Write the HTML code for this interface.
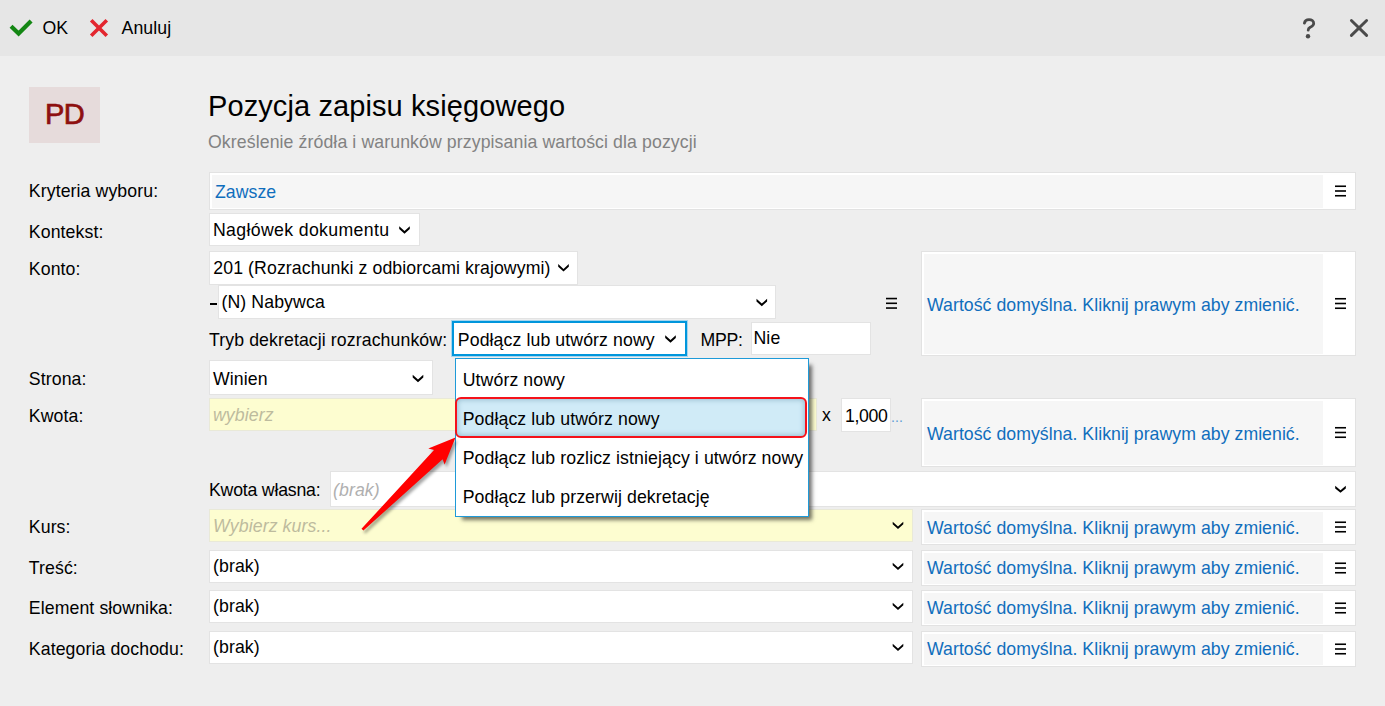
<!DOCTYPE html>
<html><head><meta charset="utf-8"><style>
html,body{margin:0;padding:0}
body{width:1385px;height:706px;overflow:hidden;background:#eeeeee;position:relative;font-family:"Liberation Sans",sans-serif}
.t{position:absolute;white-space:pre;letter-spacing:0.1px}
.b{position:absolute;box-sizing:border-box}
.s{position:absolute;overflow:visible}
</style></head><body>
<div class="b" style="left:0;top:0;width:1385px;height:56px;background:#e6e6e6"></div>
<svg class="s" style="left:0;top:0" width="1385" height="56"><polyline points="11.05,26.3 18.6,33.55 31.1,21.1" fill="none" stroke="#148714" stroke-width="4.2"/><path d="M91.2,20.2 L106.8,35.8 M106.8,20.2 L91.2,35.8" stroke="#e3262f" stroke-width="3.6" fill="none"/><path d="M1351.4,20.5 L1366.6,35.4 M1366.6,20.5 L1351.4,35.4" stroke="#4a4a4a" stroke-width="2.9" stroke-linecap="round" fill="none"/><path d="M1304.4,23.2 C1304.9,20.6 1306.8,19.7 1309,19.7 C1311.7,19.7 1313.7,21.2 1313.7,23.4 C1313.7,25.5 1311.8,26.4 1310.2,27.3 C1308.8,28.1 1308.2,28.8 1308.2,30.2" stroke="#4a4a4a" stroke-width="2.8" stroke-linecap="round" fill="none"/><circle cx="1308" cy="36.2" r="2.2" fill="#4a4a4a"/></svg>
<div class="t" style="left:42.50px;top:16.67px;font-size:17.7px;line-height:22px;color:#000;">OK</div>
<div class="t" style="left:121.50px;top:16.67px;font-size:17.7px;line-height:22px;color:#000;">Anuluj</div>
<div class="b" style="left:29px;top:87px;width:71px;height:56px;background:#e6dbdb;box-shadow:inset 0 0 0 1px #e6dbdb;"></div>
<div class="t" style="left:45.00px;top:96.15px;font-size:29px;line-height:36px;color:#8e1010;-webkit-text-stroke:0.7px #8e1010;letter-spacing:-0.5px">PD</div>
<div class="t" style="left:208.00px;top:87.65px;font-size:29px;line-height:36px;color:#000;">Pozycja zapisu księgowego</div>
<div class="t" style="left:208.00px;top:131.17px;font-size:17.7px;line-height:22px;color:#828282;">Określenie źródła i warunków przypisania wartości dla pozycji</div>
<div class="t" style="left:28.80px;top:179.77px;font-size:17.7px;line-height:22px;color:#000;">Kryteria wyboru:</div>
<div class="t" style="left:28.80px;top:221.07px;font-size:17.7px;line-height:22px;color:#000;">Kontekst:</div>
<div class="t" style="left:28.80px;top:258.47px;font-size:17.7px;line-height:22px;color:#000;">Konto:</div>
<div class="t" style="left:28.80px;top:367.97px;font-size:17.7px;line-height:22px;color:#000;">Strona:</div>
<div class="t" style="left:28.80px;top:404.87px;font-size:17.7px;line-height:22px;color:#000;">Kwota:</div>
<div class="t" style="left:28.80px;top:516.07px;font-size:17.7px;line-height:22px;color:#000;">Kurs:</div>
<div class="t" style="left:28.80px;top:556.87px;font-size:17.7px;line-height:22px;color:#000;">Treść:</div>
<div class="t" style="left:28.80px;top:597.07px;font-size:17.7px;line-height:22px;color:#000;">Element słownika:</div>
<div class="t" style="left:28.80px;top:637.57px;font-size:17.7px;line-height:22px;color:#000;">Kategoria dochodu:</div>
<div class="b" style="left:209px;top:172px;width:1147px;height:38px;background:#fff;box-shadow:inset 0 0 0 1px #e2e2e2;"></div>
<div class="b" style="left:212px;top:175px;width:1111px;height:33px;background:#f6f6f6"></div>
<svg class="s" style="left:0;top:0" width="1385" height="706"><line x1="1335" x2="1346" y1="186.25" y2="186.25" stroke="#000" stroke-width="1.6"/><line x1="1335" x2="1346" y1="191.00" y2="191.00" stroke="#000" stroke-width="1.6"/><line x1="1335" x2="1346" y1="195.75" y2="195.75" stroke="#000" stroke-width="1.6"/></svg>
<div class="t" style="left:215.00px;top:181.07px;font-size:17.7px;line-height:22px;color:#106ebd;letter-spacing:0.04px">Zawsze</div>
<div class="b" style="left:209px;top:213px;width:211px;height:33px;background:#fff;box-shadow:inset 0 0 0 1px #e3e3e3;"></div>
<div class="t" style="left:213.00px;top:219.07px;font-size:17.7px;line-height:22px;color:#000;letter-spacing:0.35px">Nagłówek dokumentu</div>
<svg class="s" style="left:0;top:0" width="1385" height="706"><polygon points="399.20,226.30 404.50,231.10 409.80,226.30 409.80,228.90 404.50,233.70 399.20,228.90" fill="#000"/></svg>
<div class="b" style="left:209px;top:251px;width:369px;height:34px;background:#fff;box-shadow:inset 0 0 0 1px #e3e3e3;"></div>
<div class="t" style="left:213.30px;top:257.47px;font-size:17.7px;line-height:22px;color:#000;">201 (Rozrachunki z odbiorcami krajowymi)</div>
<svg class="s" style="left:0;top:0" width="1385" height="706"><polygon points="558.20,264.10 563.50,268.90 568.80,264.10 568.80,266.70 563.50,271.50 558.20,266.70" fill="#000"/></svg>
<div class="b" style="left:210px;top:302.8px;width:7px;height:2px;background:#000"></div>
<div class="b" style="left:218px;top:285px;width:558px;height:34px;background:#fff;box-shadow:inset 0 0 0 1px #e3e3e3;"></div>
<div class="t" style="left:221.50px;top:290.97px;font-size:17.7px;line-height:22px;color:#000;">(N) Nabywca</div>
<svg class="s" style="left:0;top:0" width="1385" height="706"><polygon points="756.50,298.80 761.80,303.60 767.10,298.80 767.10,301.40 761.80,306.20 756.50,301.40" fill="#000"/></svg>
<svg class="s" style="left:0;top:0" width="1385" height="706"><line x1="886" x2="897" y1="298.55" y2="298.55" stroke="#000" stroke-width="1.6"/><line x1="886" x2="897" y1="303.30" y2="303.30" stroke="#000" stroke-width="1.6"/><line x1="886" x2="897" y1="308.05" y2="308.05" stroke="#000" stroke-width="1.6"/></svg>
<div class="b" style="left:921px;top:251px;width:435px;height:105px;background:#fff;box-shadow:inset 0 0 0 1px #e2e2e2;"></div>
<div class="b" style="left:924px;top:254px;width:399px;height:100px;background:#f6f6f6"></div>
<svg class="s" style="left:0;top:0" width="1385" height="706"><line x1="1335" x2="1346" y1="298.75" y2="298.75" stroke="#000" stroke-width="1.6"/><line x1="1335" x2="1346" y1="303.50" y2="303.50" stroke="#000" stroke-width="1.6"/><line x1="1335" x2="1346" y1="308.25" y2="308.25" stroke="#000" stroke-width="1.6"/></svg>
<div class="t" style="left:927.00px;top:293.97px;font-size:17.7px;line-height:22px;color:#106ebd;letter-spacing:0.04px">Wartość domyślna. Kliknij prawym aby zmienić.</div>
<div class="t" style="left:209.00px;top:329.27px;font-size:17.7px;line-height:22px;color:#000;">Tryb dekretacji rozrachunków:</div>
<div class="b" style="left:451px;top:320px;width:237px;height:37px;background:#fff;box-shadow:inset 0 0 0 1px #e3e3e3;box-shadow:inset 0 0 0 1px #a6d6ee, inset 0 0 0 3px #0096dc"></div>
<div class="t" style="left:457.80px;top:329.37px;font-size:17.7px;line-height:22px;color:#000;">Podłącz lub utwórz nowy</div>
<svg class="s" style="left:0;top:0" width="1385" height="706"><polygon points="665.20,335.30 670.50,340.10 675.80,335.30 675.80,337.90 670.50,342.70 665.20,337.90" fill="#000"/></svg>
<div class="t" style="left:700.50px;top:328.87px;font-size:17.7px;line-height:22px;color:#000;letter-spacing:-0.3px">MPP:</div>
<div class="b" style="left:751px;top:322px;width:120px;height:33px;background:#fff;box-shadow:inset 0 0 0 1px #e3e3e3;"></div>
<div class="t" style="left:753.50px;top:327.07px;font-size:17.7px;line-height:22px;color:#000;">Nie</div>
<div class="b" style="left:209px;top:360px;width:224px;height:35px;background:#fff;box-shadow:inset 0 0 0 1px #e3e3e3;"></div>
<div class="t" style="left:213.00px;top:368.07px;font-size:17.7px;line-height:22px;color:#000;">Winien</div>
<svg class="s" style="left:0;top:0" width="1385" height="706"><polygon points="412.70,374.80 418.00,379.60 423.30,374.80 423.30,377.40 418.00,382.20 412.70,377.40" fill="#000"/></svg>
<div class="b" style="left:209px;top:398px;width:608px;height:33px;background:#fdfdd0;box-shadow:inset 0 0 0 1px #e9e9d8;"></div>
<div class="t" style="left:213.00px;top:404.17px;font-size:17.7px;line-height:22px;color:#bdbb9e;font-style:italic">wybierz</div>
<div class="t" style="left:822.00px;top:404.37px;font-size:17.7px;line-height:22px;color:#000;">x</div>
<div class="b" style="left:841px;top:398px;width:50px;height:34px;background:#fff;box-shadow:inset 0 0 0 1px #e3e3e3;"></div>
<div class="t" style="left:845.00px;top:404.67px;font-size:17.7px;line-height:22px;color:#000;letter-spacing:-0.35px">1,000</div>
<div class="t" style="left:891.00px;top:407.65px;font-size:14px;line-height:18px;color:#5b9bd5;">...</div>
<div class="b" style="left:921px;top:398px;width:435px;height:69px;background:#fff;box-shadow:inset 0 0 0 1px #e2e2e2;"></div>
<div class="b" style="left:924px;top:401px;width:399px;height:64px;background:#f6f6f6"></div>
<svg class="s" style="left:0;top:0" width="1385" height="706"><line x1="1335" x2="1346" y1="427.75" y2="427.75" stroke="#000" stroke-width="1.6"/><line x1="1335" x2="1346" y1="432.50" y2="432.50" stroke="#000" stroke-width="1.6"/><line x1="1335" x2="1346" y1="437.25" y2="437.25" stroke="#000" stroke-width="1.6"/></svg>
<div class="t" style="left:927.00px;top:422.77px;font-size:17.7px;line-height:22px;color:#106ebd;letter-spacing:0.04px">Wartość domyślna. Kliknij prawym aby zmienić.</div>
<div class="t" style="left:209.00px;top:478.57px;font-size:17.7px;line-height:22px;color:#000;letter-spacing:-0.2px">Kwota własna:</div>
<div class="b" style="left:330px;top:471px;width:1026px;height:36px;background:#fff;box-shadow:inset 0 0 0 1px #e3e3e3;"></div>
<div class="t" style="left:333.00px;top:478.57px;font-size:17.7px;line-height:22px;color:#b0b0b0;font-style:italic">(brak)</div>
<svg class="s" style="left:0;top:0" width="1385" height="706"><polygon points="1335.20,485.85 1340.50,490.15 1345.80,485.85 1345.80,488.45 1340.50,492.75 1335.20,488.45" fill="#000"/></svg>
<div class="b" style="left:209px;top:509px;width:704px;height:33px;background:#fdfdd0;box-shadow:inset 0 0 0 1px #e9e9d8;"></div>
<div class="t" style="left:213.00px;top:515.37px;font-size:17.7px;line-height:22px;color:#bdbb9e;font-style:italic">Wybierz kurs...</div>
<svg class="s" style="left:0;top:0" width="1385" height="706"><polygon points="892.70,521.70 898.00,526.50 903.30,521.70 903.30,524.30 898.00,529.10 892.70,524.30" fill="#000"/></svg>
<div class="b" style="left:921px;top:509px;width:435px;height:36px;background:#fff;box-shadow:inset 0 0 0 1px #e2e2e2;"></div>
<div class="b" style="left:924px;top:512px;width:399px;height:31px;background:#f6f6f6"></div>
<svg class="s" style="left:0;top:0" width="1385" height="706"><line x1="1335" x2="1346" y1="522.25" y2="522.25" stroke="#000" stroke-width="1.6"/><line x1="1335" x2="1346" y1="527.00" y2="527.00" stroke="#000" stroke-width="1.6"/><line x1="1335" x2="1346" y1="531.75" y2="531.75" stroke="#000" stroke-width="1.6"/></svg>
<div class="t" style="left:927.00px;top:516.57px;font-size:17.7px;line-height:22px;color:#106ebd;letter-spacing:0.04px">Wartość domyślna. Kliknij prawym aby zmienić.</div>
<div class="b" style="left:209px;top:550px;width:704px;height:33px;background:#fff;box-shadow:inset 0 0 0 1px #e3e3e3;"></div>
<div class="t" style="left:213.00px;top:555.07px;font-size:17.7px;line-height:22px;color:#000;">(brak)</div>
<svg class="s" style="left:0;top:0" width="1385" height="706"><polygon points="892.70,562.70 898.00,567.50 903.30,562.70 903.30,565.30 898.00,570.10 892.70,565.30" fill="#000"/></svg>
<div class="b" style="left:921px;top:550px;width:435px;height:36px;background:#fff;box-shadow:inset 0 0 0 1px #e2e2e2;"></div>
<div class="b" style="left:924px;top:553px;width:399px;height:31px;background:#f6f6f6"></div>
<svg class="s" style="left:0;top:0" width="1385" height="706"><line x1="1335" x2="1346" y1="563.25" y2="563.25" stroke="#000" stroke-width="1.6"/><line x1="1335" x2="1346" y1="568.00" y2="568.00" stroke="#000" stroke-width="1.6"/><line x1="1335" x2="1346" y1="572.75" y2="572.75" stroke="#000" stroke-width="1.6"/></svg>
<div class="t" style="left:927.00px;top:557.37px;font-size:17.7px;line-height:22px;color:#106ebd;letter-spacing:0.04px">Wartość domyślna. Kliknij prawym aby zmienić.</div>
<div class="b" style="left:209px;top:590px;width:704px;height:33px;background:#fff;box-shadow:inset 0 0 0 1px #e3e3e3;"></div>
<div class="t" style="left:213.00px;top:594.97px;font-size:17.7px;line-height:22px;color:#000;">(brak)</div>
<svg class="s" style="left:0;top:0" width="1385" height="706"><polygon points="892.70,602.70 898.00,607.50 903.30,602.70 903.30,605.30 898.00,610.10 892.70,605.30" fill="#000"/></svg>
<div class="b" style="left:921px;top:590px;width:435px;height:36px;background:#fff;box-shadow:inset 0 0 0 1px #e2e2e2;"></div>
<div class="b" style="left:924px;top:593px;width:399px;height:31px;background:#f6f6f6"></div>
<svg class="s" style="left:0;top:0" width="1385" height="706"><line x1="1335" x2="1346" y1="603.25" y2="603.25" stroke="#000" stroke-width="1.6"/><line x1="1335" x2="1346" y1="608.00" y2="608.00" stroke="#000" stroke-width="1.6"/><line x1="1335" x2="1346" y1="612.75" y2="612.75" stroke="#000" stroke-width="1.6"/></svg>
<div class="t" style="left:927.00px;top:596.87px;font-size:17.7px;line-height:22px;color:#106ebd;letter-spacing:0.04px">Wartość domyślna. Kliknij prawym aby zmienić.</div>
<div class="b" style="left:209px;top:631px;width:704px;height:33px;background:#fff;box-shadow:inset 0 0 0 1px #e3e3e3;"></div>
<div class="t" style="left:213.00px;top:635.77px;font-size:17.7px;line-height:22px;color:#000;">(brak)</div>
<svg class="s" style="left:0;top:0" width="1385" height="706"><polygon points="892.70,643.70 898.00,648.50 903.30,643.70 903.30,646.30 898.00,651.10 892.70,646.30" fill="#000"/></svg>
<div class="b" style="left:921px;top:631px;width:435px;height:36px;background:#fff;box-shadow:inset 0 0 0 1px #e2e2e2;"></div>
<div class="b" style="left:924px;top:634px;width:399px;height:31px;background:#f6f6f6"></div>
<svg class="s" style="left:0;top:0" width="1385" height="706"><line x1="1335" x2="1346" y1="644.25" y2="644.25" stroke="#000" stroke-width="1.6"/><line x1="1335" x2="1346" y1="649.00" y2="649.00" stroke="#000" stroke-width="1.6"/><line x1="1335" x2="1346" y1="653.75" y2="653.75" stroke="#000" stroke-width="1.6"/></svg>
<div class="t" style="left:927.00px;top:637.67px;font-size:17.7px;line-height:22px;color:#106ebd;letter-spacing:0.04px">Wartość domyślna. Kliknij prawym aby zmienić.</div>
<div class="b" style="left:455px;top:358px;width:354px;height:159px;background:#fff;border:1px solid #1e9ad8;box-shadow:5px 5px 4px -2px rgba(0,0,0,0.55)"></div>
<div class="b" style="left:455px;top:397px;width:352px;height:41px;background:#d0ebf7;border:2.5px solid #f5121a;border-radius:6px;box-shadow:inset 0 0 5px 1px rgba(100,150,175,0.5)"></div>
<div class="t" style="left:462.70px;top:368.97px;font-size:17.7px;line-height:22px;color:#000;">Utwórz nowy</div>
<div class="t" style="left:462.70px;top:408.02px;font-size:17.7px;line-height:22px;color:#000;">Podłącz lub utwórz nowy</div>
<div class="t" style="left:462.70px;top:447.07px;font-size:17.7px;line-height:22px;color:#000;">Podłącz lub rozlicz istniejący i utwórz nowy</div>
<div class="t" style="left:462.70px;top:486.12px;font-size:17.7px;line-height:22px;color:#000;">Podłącz lub przerwij dekretację</div>
<svg class="s" style="left:0;top:0" width="1385" height="706"><defs><filter id="sh" x="-20%" y="-20%" width="140%" height="140%"><feGaussianBlur stdDeviation="1.5"/></filter></defs><polygon points="361.5,528.8 434,450 428.3,448.5 455.5,437.6 444.6,464.5 442.6,459.2 363.4,530.6" fill="rgba(0,0,0,0.35)" transform="translate(2,3)" filter="url(#sh)"/><polygon points="361.5,528.8 434,450 428.3,448.5 455.5,437.6 444.6,464.5 442.6,459.2 363.4,530.6" fill="#ff0000"/></svg>
</body></html>
